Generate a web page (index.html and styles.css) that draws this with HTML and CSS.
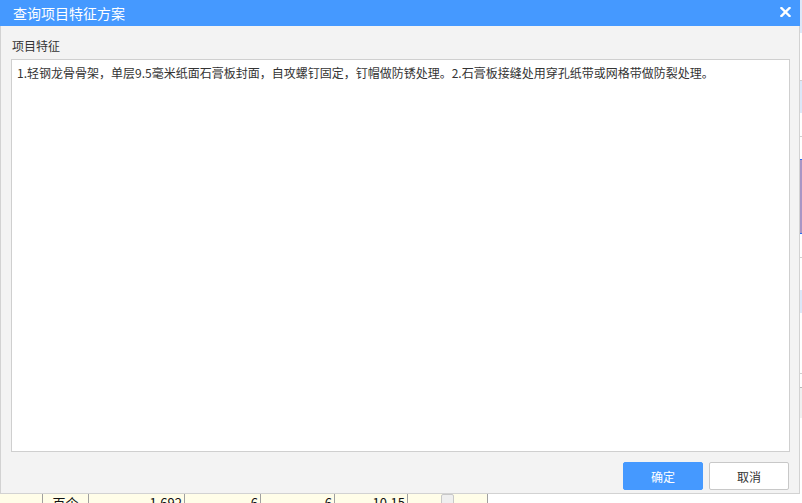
FILE: index.html
```html
<!DOCTYPE html>
<html lang="zh-CN">
<head>
<meta charset="utf-8">
<title>查询项目特征方案</title>
<link rel="stylesheet" href="styles.css">
</head>
<body>
<div class="app">
  <div class="main">
    <div class="grid-row">
      <div class="cell c0"></div>
      <div class="cell c1 center">百个</div>
      <div class="cell c2 num">1.692</div>
      <div class="cell c3 num">6</div>
      <div class="cell c4 num">6</div>
      <div class="cell c5 num">10.15</div>
      <div class="cell c6"><span class="check"></span></div>
    </div>
  </div>
  <div class="side">
    <div class="band b-blue h33"></div>
    <div class="band h47"></div>
    <div class="band line"></div>
    <div class="band b-blue h32"></div>
    <div class="band h23"></div>
    <div class="band line"></div>
    <div class="band h22"></div>
    <div class="band b-sel-edge"></div>
    <div class="band b-purple h73"></div>
    <div class="band b-sel-edge"></div>
    <div class="band h23"></div>
    <div class="band line"></div>
    <div class="band h32"></div>
    <div class="band b-blue h23"></div>
    <div class="band h60"></div>
    <div class="band line"></div>
    <div class="band h13"></div>
    <div class="band line dark"></div>
    <div class="band b-gray h30"></div>
  </div>
</div>

<div class="dialog">
  <div class="titlebar">
    <span class="title">查询项目特征方案</span>
    <svg class="close" width="11" height="10" viewBox="0 0 11 10" aria-label="关闭">
      <path d="M1.5 1 L9.5 9 M9.5 1 L1.5 9" stroke="#fff" stroke-width="2.4" stroke-linecap="square"/>
    </svg>
  </div>
  <div class="body">
    <div class="label">项目特征</div>
    <div class="textbox">1.轻钢龙骨骨架，单层9.5毫米纸面石膏板封面，自攻螺钉固定，钉帽做防锈处理。2.石膏板接缝处用穿孔纸带或网格带做防裂处理。</div>
    <div class="actions">
      <button class="btn primary">确定</button>
      <button class="btn">取消</button>
    </div>
  </div>
</div>
</body>
</html>
```

FILE: styles.css
```css
* { box-sizing: border-box; }
html, body {
  margin: 0;
  padding: 0;
  width: 802px;
  height: 503px;
  overflow: hidden;
  background: #ffffff;
  font-family: "Noto Sans CJK SC", "Microsoft YaHei", "Noto Sans", sans-serif;
  font-size: 12px;
  color: #333;
}

/* underlying application */
.app {
  display: flex;
  width: 802px;
  height: 503px;
}
.main {
  width: 800px;
  display: flex;
  flex-direction: column;
  justify-content: flex-end;
}
.grid-row {
  display: flex;
  height: 9px;
  overflow: hidden;
  background: #ffffff;
}
.cell {
  height: 20px;
  background: #fffde8;
  border-right: 1px solid #a0a0a0;
  line-height: 20px;
  padding: 0 2px;
  font-family: "Noto Sans CJK SC", sans-serif;
  font-size: 13px;
  color: #111;
  margin-top: -1px;
}
.center { text-align: center; }
.num { text-align: right; }
.c0 { width: 43px; }
.c1 { width: 46px; }
.c2 { width: 96px; }
.c3 { width: 76px; }
.c4 { width: 74px; }
.c5 { width: 73px; }
.c6 { width: 80px; padding: 0; }
.check {
  display: block;
  margin: 1px 0 0 33px;
  width: 13px;
  height: 14px;
  background: #efefef;
  border: 1px solid #c8c8c8;
  border-radius: 2px;
}

.side {
  width: 2px;
  display: flex;
  flex-direction: column;
}
.band { width: 2px; background: #fff; }
.b-blue { background: #dce8f8; }
.b-purple { background: #a995c5; }
.b-gray { background: #f0f0f0; }
.b-sel-edge { height: 1px; background: #2a6cf0; }
.line { height: 1px; background: #cfcfcf; }
.line.dark { background: #b8b8b8; }
.h13 { height: 13px; }
.h22 { height: 22px; }
.h23 { height: 23px; }
.h30 { height: 30px; }
.h32 { height: 32px; }
.h33 { height: 33px; }
.h47 { height: 47px; }
.h60 { height: 60px; }
.h73 { height: 73px; }

/* dialog overlay */
.dialog {
  position: absolute;
  left: 0;
  top: 0;
  width: 800px;
  height: 494px;
  background: #f3f3f3;
  border: 1px solid #d2d2d2;
  border-top: none;
  display: flex;
  flex-direction: column;
}
.titlebar {
  height: 26px;
  margin: 0 -1px;
  background: #4599ff;
  color: #fff;
  display: flex;
  align-items: center;
  justify-content: space-between;
  padding: 0 9px 1px 13px;
}
.title {
  font-size: 14px;
  line-height: 20px;
  letter-spacing: 0;
}
.close { display: block; margin-top: -2px; }

.body {
  flex: 1;
  display: flex;
  flex-direction: column;
  padding: 11px 9px 3px 10px;
}
.label {
  line-height: 17px;
  padding-left: 1px;
  color: #333;
}
.textbox {
  margin-top: 5px;
  flex: 1;
  background: #fff;
  border: 1px solid #cfcfcf;
  padding: 4px 5px;
  line-height: 18px;
  color: #333;
}
.actions {
  display: flex;
  justify-content: flex-end;
  gap: 6px;
  margin-top: 10px;
  padding-right: 1px;
}
.btn {
  width: 80px;
  height: 28px;
  font-family: inherit;
  font-size: 12px;
  color: #333;
  background: #fff;
  border: 1px solid #c8c8c8;
  border-radius: 2px;
  padding: 0;
}
.btn.primary {
  background: #4599ff;
  border-color: #4599ff;
  color: #fff;
}
```
